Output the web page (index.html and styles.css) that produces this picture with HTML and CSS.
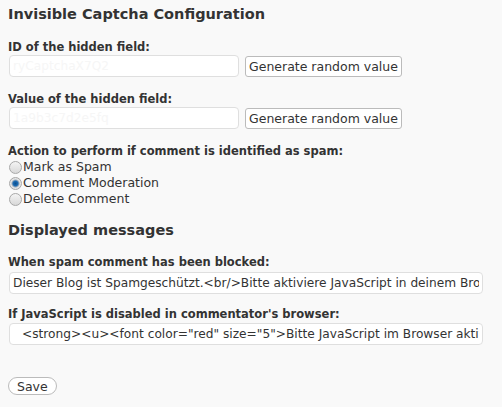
FILE: index.html
```html
<!DOCTYPE html>
<html lang="en">
<head>
    <meta charset="UTF-8">
    <title>Invisible Captcha Configuration</title>
    <link rel="stylesheet" href="styles.css">
</head>
<body>
    <div class="wrap">
        <h2>Invisible Captcha Configuration</h2>
        <form>
            <div class="field">
                <label for="fieldId">ID of the hidden field:</label>
                <div class="row">
                    <input type="text" id="fieldId" class="short" value="ryCaptchaX7Q2">
                    <button type="button" class="button">Generate random value</button>
                </div>
            </div>

            <div class="field">
                <label for="fieldValue">Value of the hidden field:</label>
                <div class="row">
                    <input type="text" id="fieldValue" class="short" value="1a9b3c7d2e5fq">
                    <button type="button" class="button">Generate random value</button>
                </div>
            </div>

            <div class="field">
                <label>Action to perform if comment is identified as spam:</label>
                <div class="radios">
                    <label class="radio"><input type="radio" name="action">Mark as Spam</label>
                    <label class="radio"><input type="radio" name="action" checked>Comment Moderation</label>
                    <label class="radio"><input type="radio" name="action">Delete Comment</label>
                </div>
            </div>

            <h3>Displayed messages</h3>

            <div class="field msg first">
                <label for="msgBlocked">When spam comment has been blocked:</label>
                <input type="text" id="msgBlocked" class="wide" value="Dieser Blog ist Spamgeschützt.<br/>Bitte aktiviere JavaScript in deinem Browser.">
            </div>

            <div class="field msg">
                <label for="msgNoJs">If JavaScript is disabled in commentator's browser:</label>
                <input type="text" id="msgNoJs" class="wide indent" value="<strong><u><font color=&quot;red&quot; size=&quot;5&quot;>Bitte JavaScript im Browser aktivieren!</font></u></strong>">
            </div>

            <div class="submit">
                <button type="button" class="button save">Save</button>
            </div>
        </form>
    </div>
</body>
</html>
```

FILE: styles.css
```css
html {
    background: #f9f9f9;
}

body {
    font-family: "DejaVu Sans", Verdana, sans-serif;
    font-size: 12.5px;
    color: #333;
    margin: 0;
    padding: 0 8px;
}

h2 {
    font-size: 14.5px;
    margin: 0;
    padding-top: 4px;
    line-height: 20px;
}

h3 {
    font-size: 14.5px;
    margin: 13px 0 0;
    line-height: 20px;
}

.field {
    margin-top: 14px;
}

h2 + form .field:first-child {
    margin-top: 15px;
}

.field > label {
    display: block;
    font-weight: bold;
    font-size: 11.5px;
    line-height: 16px;
}

.msg > label {
    margin-bottom: 1px;
}

.msg.first > label {
    margin-bottom: 2px;
}

.msg {
    margin-top: 12px;
}

.msg.first {
    margin-top: 14px;
}

.row {
    display: flex;
    align-items: center;
    gap: 6px;
}

input[type="text"] {
    font-family: inherit;
    font-size: 12.2px;
    color: #333;
    height: 22px;
    box-sizing: border-box;
    border: 1px solid #dfdfdf;
    border-radius: 4px;
    background: #fff;
    padding: 0 3px;
    margin: 0 0 0 1px;
}

.short {
    width: 230px;
    color: #f6f6f6 !important;
}

.wide {
    width: 474px;
}

.indent {
    padding-left: 12px !important;
}

.button {
    font-family: inherit;
    font-size: 12.5px;
    color: #333;
    background: #fff;
    border: 1px solid #bbb;
    border-radius: 3px;
    height: 21px;
    padding: 0 3px;
    cursor: pointer;
}

.radios {
    display: flex;
    flex-direction: column;
}

.radio {
    display: flex;
    align-items: center;
    line-height: 16px;
    height: 16px;
}

.radio input {
    appearance: none;
    margin: 0 1px 0 1px;
    width: 13px;
    height: 13px;
    border: 1px solid #a8a8a8;
    border-radius: 50%;
    background: linear-gradient(#f4f4f4, #d8d8d8);
    box-sizing: border-box;
}

.radio input:checked {
    background: radial-gradient(circle, #0b4e8c 0, #1d6cb4 2.5px, #9ab 3.5px, #e6e6e6 4.5px, #d8d8d8 100%);
}

.submit {
    margin-top: 32px;
}

.save {
    border-radius: 10px;
    height: 18px;
    padding: 0 8px;
    border-color: #bbb;
}
```
